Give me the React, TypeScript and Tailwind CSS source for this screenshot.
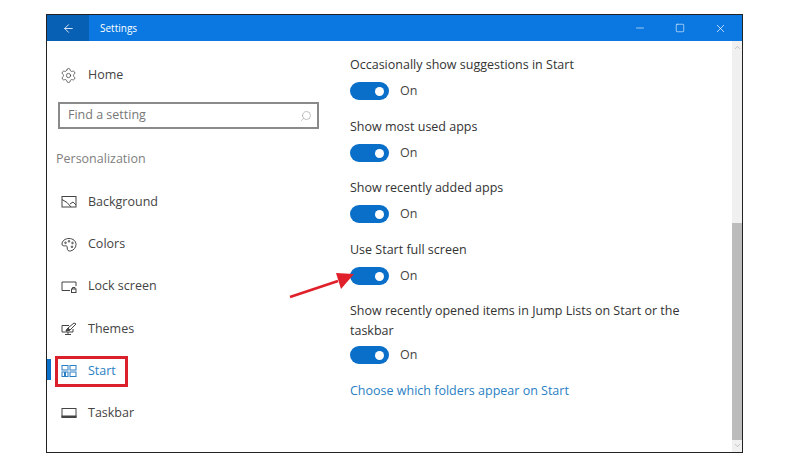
import React from "react";
import { ArrowLeft, Minus, Square, X, Search, Settings, ChevronUp, ChevronDown } from "lucide-react";

const BackgroundIcon = () => (
  <svg width="16" height="14" viewBox="0 0 16 14" fill="none" stroke="currentColor" strokeWidth="1">
    <rect x="1" y="1.5" width="14" height="10.5" />
    <path d="M1 4.5 L6 7.5 L10 12 M9 9 L12 7 L15 10" />
  </svg>
);

const ColorsIcon = () => (
  <svg width="16" height="16" viewBox="0 0 16 16" fill="none" stroke="currentColor" strokeWidth="1">
    <path d="M8 1.5 C4 1.5 1 4 1 7 C1 9 3 9 4.5 8.8 C6 8.7 6.5 9.5 6.2 11 C6 13 7.5 14.5 9.5 14 C13 13.2 15 10.5 15 7.5 C15 4 12 1.5 8 1.5 Z" />
    <circle cx="4.5" cy="5.8" r="0.8" />
    <circle cx="8" cy="4.3" r="0.8" />
    <circle cx="11.5" cy="6" r="0.8" />
    <circle cx="11" cy="9.8" r="0.8" />
  </svg>
);

const LockIcon = () => (
  <svg width="16" height="14" viewBox="0 0 16 14" fill="none" stroke="currentColor" strokeWidth="1">
    <path d="M9 10.5 H1 V2 H15 V6" />
    <rect x="10.5" y="9" width="4.5" height="3.5" />
    <path d="M11.5 9 V7.5 H14 V9" />
  </svg>
);

const ThemesIcon = () => (
  <svg width="16" height="14" viewBox="0 0 16 14" fill="none" stroke="currentColor" strokeWidth="1">
    <path d="M8 3.5 H1 V10 H12 V7" />
    <path d="M4 12.5 H10 M7 10 V12.5" />
    <path d="M5 9 L7 6 L13 1 L15 2 L9 8 Z" />
    <path d="M5 9 L7 6 L9 8 Z" fill="currentColor" />
  </svg>
);

const StartIcon = () => (
  <svg width="16" height="14" viewBox="0 0 16 14" fill="none" stroke="currentColor" strokeWidth="1">
    <rect x="1" y="1.5" width="6" height="4.5" />
    <rect x="9" y="1.5" width="6" height="4.5" />
    <rect x="1" y="8" width="2.5" height="4.5" />
    <rect x="4.5" y="8" width="2.5" height="4.5" />
    <rect x="9" y="8" width="6" height="4.5" />
  </svg>
);

const TaskbarIcon = () => (
  <svg width="16" height="12" viewBox="0 0 16 12" fill="none" stroke="currentColor" strokeWidth="1">
    <rect x="1" y="1.5" width="14" height="8.5" />
    <rect x="1" y="9" width="14" height="1.5" fill="currentColor" />
  </svg>
);

const navItems = [
  { label: "Background", icon: <BackgroundIcon /> },
  { label: "Colors", icon: <ColorsIcon /> },
  { label: "Lock screen", icon: <LockIcon /> },
  { label: "Themes", icon: <ThemesIcon /> },
  { label: "Start", icon: <StartIcon />, active: true },
  { label: "Taskbar", icon: <TaskbarIcon /> },
];

const Toggle = () => (
  <div className="flex items-center gap-[11px] h-5">
    <div className="w-[39px] h-[18px] rounded-full bg-[#0a6fc9] flex items-center justify-end pr-[5px]">
      <div className="w-[9px] h-[9px] rounded-full bg-white" />
    </div>
    <span className="text-[#444444]">On</span>
  </div>
);

const settings = [
  { label: "Occasionally show suggestions in Start", mt: "mt-0", gap: "mt-[6px]" },
  { label: "Show most used apps", mt: "mt-[16px]", gap: "mt-[6px]" },
  { label: "Show recently added apps", mt: "mt-[15px]", gap: "mt-[6px]" },
  { label: "Use Start full screen", mt: "mt-[16px]", gap: "mt-[6px]" },
  { label: "Show recently opened items in Jump Lists on Start or the taskbar", mt: "mt-[15px]", gap: "mt-[4px]" },
];

export default function App() {
  return (
    <div className="w-[800px] h-[474px] bg-white overflow-hidden pt-[14px] pl-[46px] font-['Open_Sans',sans-serif] text-[12.5px]">
      <div className="relative w-[697px] h-[439px] border border-[#222222] flex flex-col">
        <div className="h-[26px] bg-[#0a78e0] flex items-center text-white shrink-0">
          <div className="w-[42px] h-full bg-[#0860b4] flex items-center justify-center">
            <ArrowLeft size={13} strokeWidth={1.5} />
          </div>
          <span className="ml-[11px] text-[10px]">Settings</span>
          <div className="ml-auto flex items-center gap-[29px] pr-[15px]">
            <Minus size={12} strokeWidth={1.2} />
            <Square size={10} strokeWidth={1.4} />
            <X size={13} strokeWidth={1.3} />
          </div>
        </div>

        <div className="flex flex-1 min-h-0">
          <div className="w-[303px] shrink-0 text-[#444444]">
            <div className="flex items-center h-5 mt-[24px] pl-[13px] gap-[11px]">
              <Settings size={17} strokeWidth={1.1} />
              <span>Home</span>
            </div>
            <div className="mt-[17px] ml-[11px] w-[261px] h-[27px] border-2 border-[#8a8a8a] flex items-center justify-between pl-[8px] pr-[5px] text-[#777777]">
              <span>Find a setting</span>
              <Search size={12} strokeWidth={1.2} className="-scale-x-100 text-[#999999]" />
            </div>
            <div className="mt-[21px] ml-[9px] text-[#808080]">Personalization</div>
            <div className="mt-[23.7px] flex flex-col gap-[22.2px]">
              {navItems.map((item) => (
                <div key={item.label} className={`relative flex items-center h-5 pl-[14px] gap-[11px] ${item.active ? "text-[#2a7fc4]" : ""}`}>
                  {item.active && <div className="absolute left-0 -top-[2px] w-1 h-[21px] bg-[#0a6fc9]" />}
                  <span className="w-4 flex justify-center">{item.icon}</span>
                  <span>{item.label}</span>
                </div>
              ))}
            </div>
          </div>

          <div className="flex-1 pt-[14px] text-[#333333] leading-[20px]">
            {settings.map((s) => (
              <div key={s.label} className={s.mt}>
                <div className="w-[345px]">{s.label}</div>
                <div className={s.gap}>
                  <Toggle />
                </div>
              </div>
            ))}
            <div className="mt-[16px] text-[#2a7fc4]">Choose which folders appear on Start</div>
          </div>

          <div className="w-[10px] shrink-0 bg-[#f0f0f0] flex flex-col items-center text-[#b0b0b0]">
            <ChevronUp size={9} className="mt-[2px]" />
            <div className="w-full h-[217px] bg-[#bcbcbc] mt-[171px]" />
            <ChevronDown size={9} className="mt-[1px]" />
          </div>
        </div>

        <div className="absolute left-[8px] top-[341px] w-[73px] h-[31px] border-[3px] border-[#d9202b]" />
        <svg className="absolute left-[240px] top-[250px]" width="70" height="40" viewBox="0 0 70 40">
          <path d="M3 32 L51 16" stroke="#e0202a" strokeWidth="2.6" fill="none" />
          <path d="M67 9 L49 8 L54 24 Z" fill="#e0202a" />
        </svg>
      </div>
    </div>
  );
}
